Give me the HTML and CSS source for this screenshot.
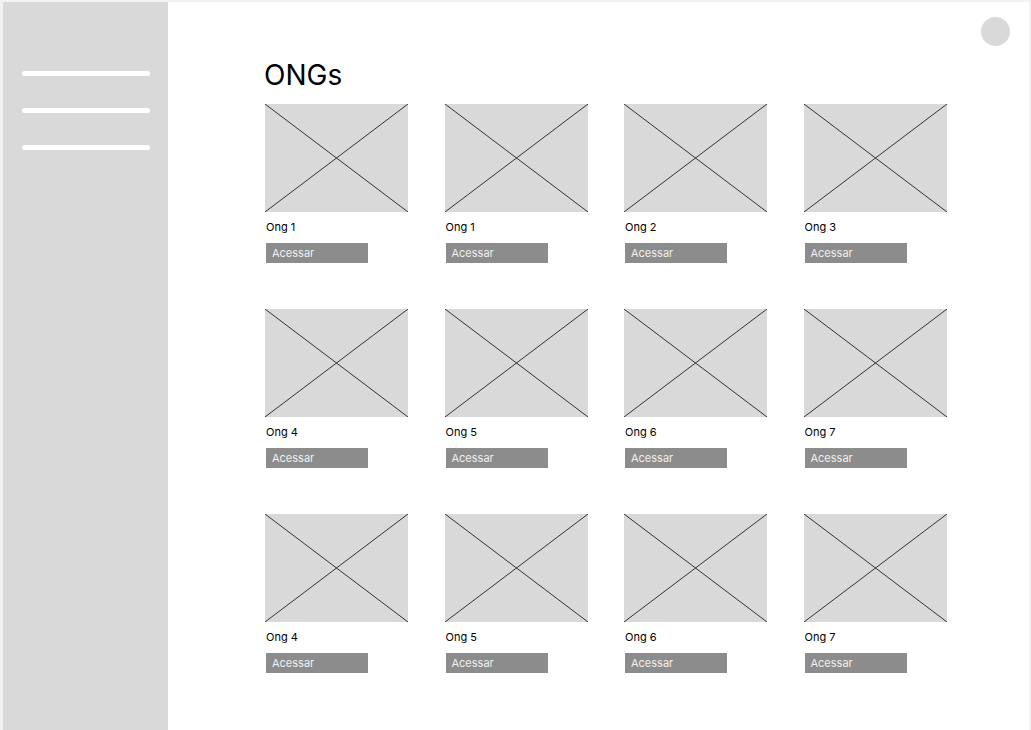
FILE: index.html
```html
<!DOCTYPE html>
<html lang="pt">
<head>
<meta charset="utf-8">
<title>ONGs</title>
<link rel="stylesheet" href="styles.css">
</head>
<body>
<div class="frame">
  <aside class="sidebar">
    <span class="menu-line"></span>
    <span class="menu-line"></span>
    <span class="menu-line"></span>
  </aside>
  <main class="main">
    <div class="avatar"></div>
    <h1 class="title">ONGs</h1>
    <div class="grid">
      <div class="card"><div class="ph"><svg viewBox="0 0 143 108" preserveAspectRatio="none"><line x1="0" y1="0" x2="143" y2="108"/><line x1="143" y1="0" x2="0" y2="108"/></svg></div><div class="label">Ong 1</div><div class="btn">Acessar</div></div>
      <div class="card"><div class="ph"><svg viewBox="0 0 143 108" preserveAspectRatio="none"><line x1="0" y1="0" x2="143" y2="108"/><line x1="143" y1="0" x2="0" y2="108"/></svg></div><div class="label">Ong 1</div><div class="btn">Acessar</div></div>
      <div class="card"><div class="ph"><svg viewBox="0 0 143 108" preserveAspectRatio="none"><line x1="0" y1="0" x2="143" y2="108"/><line x1="143" y1="0" x2="0" y2="108"/></svg></div><div class="label">Ong 2</div><div class="btn">Acessar</div></div>
      <div class="card"><div class="ph"><svg viewBox="0 0 143 108" preserveAspectRatio="none"><line x1="0" y1="0" x2="143" y2="108"/><line x1="143" y1="0" x2="0" y2="108"/></svg></div><div class="label">Ong 3</div><div class="btn">Acessar</div></div>
      <div class="card"><div class="ph"><svg viewBox="0 0 143 108" preserveAspectRatio="none"><line x1="0" y1="0" x2="143" y2="108"/><line x1="143" y1="0" x2="0" y2="108"/></svg></div><div class="label">Ong 4</div><div class="btn">Acessar</div></div>
      <div class="card"><div class="ph"><svg viewBox="0 0 143 108" preserveAspectRatio="none"><line x1="0" y1="0" x2="143" y2="108"/><line x1="143" y1="0" x2="0" y2="108"/></svg></div><div class="label">Ong 5</div><div class="btn">Acessar</div></div>
      <div class="card"><div class="ph"><svg viewBox="0 0 143 108" preserveAspectRatio="none"><line x1="0" y1="0" x2="143" y2="108"/><line x1="143" y1="0" x2="0" y2="108"/></svg></div><div class="label">Ong 6</div><div class="btn">Acessar</div></div>
      <div class="card"><div class="ph"><svg viewBox="0 0 143 108" preserveAspectRatio="none"><line x1="0" y1="0" x2="143" y2="108"/><line x1="143" y1="0" x2="0" y2="108"/></svg></div><div class="label">Ong 7</div><div class="btn">Acessar</div></div>
      <div class="card"><div class="ph"><svg viewBox="0 0 143 108" preserveAspectRatio="none"><line x1="0" y1="0" x2="143" y2="108"/><line x1="143" y1="0" x2="0" y2="108"/></svg></div><div class="label">Ong 4</div><div class="btn">Acessar</div></div>
      <div class="card"><div class="ph"><svg viewBox="0 0 143 108" preserveAspectRatio="none"><line x1="0" y1="0" x2="143" y2="108"/><line x1="143" y1="0" x2="0" y2="108"/></svg></div><div class="label">Ong 5</div><div class="btn">Acessar</div></div>
      <div class="card"><div class="ph"><svg viewBox="0 0 143 108" preserveAspectRatio="none"><line x1="0" y1="0" x2="143" y2="108"/><line x1="143" y1="0" x2="0" y2="108"/></svg></div><div class="label">Ong 6</div><div class="btn">Acessar</div></div>
      <div class="card"><div class="ph"><svg viewBox="0 0 143 108" preserveAspectRatio="none"><line x1="0" y1="0" x2="143" y2="108"/><line x1="143" y1="0" x2="0" y2="108"/></svg></div><div class="label">Ong 7</div><div class="btn">Acessar</div></div>
    </div>
  </main>
</div>
</body>
</html>
```

FILE: styles.css
```css
* { box-sizing: border-box; }
html, body { margin: 0; padding: 0; }
body {
  width: 1031px;
  height: 730px;
  overflow: hidden;
  background: #f2f2f2;
  font-family: Inter, "Liberation Sans", sans-serif;
  color: #000;
}
.frame {
  display: flex;
  height: 730px;
  padding: 2px 2px 0 3px;
}
.sidebar {
  width: 165px;
  flex: none;
  background: #d9d9d9;
  display: flex;
  flex-direction: column;
  gap: 32px;
  padding: 69px 0 0 19px;
}
.menu-line {
  display: block;
  width: 128px;
  height: 5px;
  border-radius: 3px;
  background: #ffffff;
}
.main {
  position: relative;
  flex: 1;
  background: #ffffff;
  padding: 56px 0 0 97px;
}
.avatar {
  position: absolute;
  top: 15px;
  right: 19px;
  width: 29px;
  height: 29px;
  border-radius: 50%;
  background: #d9d9d9;
}
.title {
  margin: 0 0 12px -1px;
  font-size: 28px;
  line-height: 34px;
  font-weight: 400;
}
.grid {
  display: grid;
  grid-template-columns: repeat(4, 143px);
  column-gap: 36.5px;
  row-gap: 46px;
}
.card {
  display: flex;
  flex-direction: column;
}
.ph {
  width: 143px;
  height: 108px;
  background: #d9d9d9;
}
.ph svg {
  display: block;
  width: 100%;
  height: 100%;
}
.ph line {
  stroke: #333333;
  stroke-width: 1;
}
.label {
  margin: 7px 0 0 1px;
  font-size: 11px;
  line-height: 16px;
}
.btn {
  margin: 8px 0 0 1px;
  width: 102px;
  height: 20px;
  background: #8c8c8c;
  color: #f0f0f0;
  font-size: 11px;
  line-height: 20px;
  padding-left: 6px;
}
```
